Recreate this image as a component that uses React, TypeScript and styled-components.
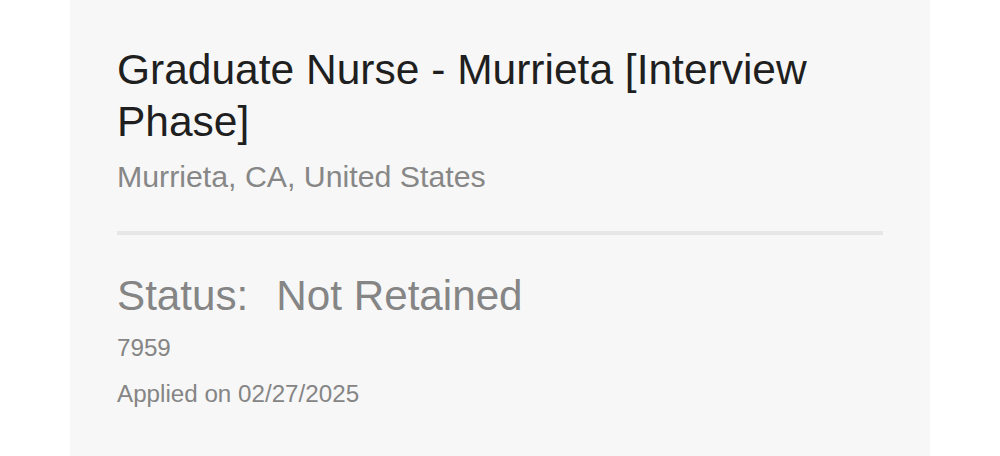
import styled, { createGlobalStyle } from 'styled-components';

const GlobalStyle = createGlobalStyle`
  html, body {
    margin: 0;
    padding: 0;
    background: #ffffff;
  }
  body {
    font-family: 'Liberation Sans', Arial, Helvetica, sans-serif;
  }
`;

const Page = styled.div`
  height: 456px;
  display: flex;
  justify-content: center;
  overflow: hidden;
`;

const Card = styled.div`
  width: 860px;
  background: #f7f7f7;
  padding: 44px 47px 0;
  box-sizing: border-box;
  display: flex;
  flex-direction: column;
`;

const Title = styled.h1`
  margin: 0;
  font-size: 42.5px;
  line-height: 52px;
  font-weight: 400;
  color: #1f1f1f;
  max-width: 730px;
`;

const Location = styled.div`
  margin-top: 11px;
  font-size: 30.3px;
  line-height: 36px;
  color: #878787;
`;

const Divider = styled.hr`
  margin: 36px 0 35px;
  border: none;
  height: 4px;
  background: #e6e6e6;
`;

const Status = styled.div`
  display: flex;
  gap: 28px;
  font-size: 42.2px;
  line-height: 52px;
  color: #858585;
`;

const Meta = styled.div<{ $gap: number }>`
  margin-top: ${({ $gap }) => $gap}px;
  font-size: 24.2px;
  line-height: 30px;
  color: #858585;
`;

export default function App() {
  return (
    <>
      <GlobalStyle />
      <Page>
        <Card>
          <Title>Graduate Nurse - Murrieta [Interview Phase]</Title>
          <Location>Murrieta, CA, United States</Location>
          <Divider />
          <Status>
            <span>Status:</span>
            <span>Not Retained</span>
          </Status>
          <Meta $gap={11}>7959</Meta>
          <Meta $gap={16}>Applied on 02/27/2025</Meta>
        </Card>
      </Page>
    </>
  );
}
